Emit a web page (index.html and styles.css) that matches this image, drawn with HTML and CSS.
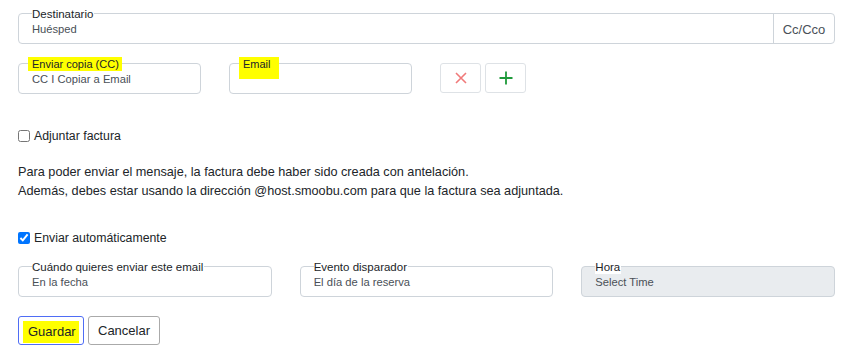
FILE: index.html
```html
<!DOCTYPE html>
<html lang="es">
<head>
<meta charset="utf-8">
<link rel="stylesheet" href="styles.css">
</head>
<body>
<div class="page">
  <div class="field dest">
    <div class="field-main">
      <span class="label">Destinatario</span>
      <span class="value">Huésped</span>
    </div>
    <div class="addon">Cc/Cco</div>
  </div>

  <div class="cc-row">
    <div class="field w183">
      <div class="field-main">
        <span class="label hl">Enviar copia (CC)</span>
        <span class="value">CC I Copiar a Email</span>
      </div>
    </div>
    <div class="field w183">
      <div class="field-main">
        <span class="label hl tall">Email</span>
        <span class="value"></span>
      </div>
    </div>
    <div class="icon-btns">
      <button class="icon-btn" type="button" aria-label="Eliminar">
        <svg width="12" height="12" viewBox="0 0 12 12"><path d="M1 1L11 11M11 1L1 11" stroke="#f07a7a" stroke-width="1.6" fill="none"/></svg>
      </button>
      <button class="icon-btn" type="button" aria-label="Añadir">
        <svg width="14" height="14" viewBox="0 0 14 14"><path d="M7 0.5V13.5M0.5 7H13.5" stroke="#1e9a3a" stroke-width="1.8" fill="none"/></svg>
      </button>
    </div>
  </div>

  <label class="check first"><input type="checkbox"> Adjuntar factura</label>

  <p class="info">Para poder enviar el mensaje, la factura debe haber sido creada con antelación.<br>Además, debes estar usando la dirección @host.smoobu.com para que la factura sea adjuntada.</p>

  <label class="check second"><input type="checkbox" checked> Enviar automáticamente</label>

  <div class="grid3">
    <div class="field">
      <div class="field-main">
        <span class="label">Cuándo quieres enviar este email</span>
        <span class="value">En la fecha</span>
      </div>
    </div>
    <div class="field">
      <div class="field-main">
        <span class="label">Evento disparador</span>
        <span class="value">El día de la reserva</span>
      </div>
    </div>
    <div class="field disabled">
      <div class="field-main">
        <span class="label">Hora</span>
        <span class="value">Select Time</span>
      </div>
    </div>
  </div>

  <div class="actions">
    <button class="btn primary" type="button"><span class="hl-text">Guardar</span></button>
    <button class="btn" type="button">Cancelar</button>
  </div>
</div>
</body>
</html>
```

FILE: styles.css
```css
* { box-sizing: border-box; }
body {
  margin: 0;
  background: #fff;
  font-family: "Liberation Sans", Arial, sans-serif;
  color: #212529;
}
.page {
  padding: 13px 19px 0 18px;
  width: 854px;
}
.field {
  position: relative;
  display: flex;
  height: 31px;
  border: 1px solid #ced4da;
  border-radius: 4px;
  background: #fff;
}
.field.disabled { background: #e9ecef; }
.field-main {
  flex: 1;
  position: relative;
  padding: 8px 0 0 13px;
}
.label {
  position: absolute;
  top: -6px;
  left: 13px;
  background: #fff;
  font-size: 11.5px;
  line-height: 13px;
  color: #212529;
  padding-right: 1px;
}
.label.hl {
  background: #ffff00;
  top: -7px;
  left: 9px;
  padding: 1px 3px 0 4px;
  line-height: 13px;
  font-size: 11px;
}
.label.tall {
  height: 22px;
  padding-right: 8px;
}
.value {
  display: block;
  font-size: 11.2px;
  line-height: 14px;
  color: #495057;
}
.addon {
  width: 61px;
  border-left: 1px solid #ced4da;
  display: flex;
  align-items: center;
  justify-content: center;
  font-size: 13px;
  color: #495057;
  padding-top: 1px;
}
.cc-row {
  display: flex;
  gap: 28px;
  margin-top: 19px;
}
.w183 { width: 183px; }
.icon-btns {
  display: flex;
  gap: 4px;
}
.icon-btn {
  width: 41px;
  height: 30px;
  border: 1px solid #dee2e6;
  border-radius: 3px;
  background: #fff;
  display: flex;
  align-items: center;
  justify-content: center;
  padding: 0;
}
.check {
  display: flex;
  align-items: center;
  font-size: 12.3px;
  line-height: 16px;
  color: #212529;
}
.check input {
  margin: 0 4px 0 0;
  width: 12px;
  height: 12px;
}
.check.first { margin-top: 34px; }
.info {
  margin: 19px 0 0;
  font-size: 12.7px;
  line-height: 19px;
  color: #212529;
}
.check.second { margin-top: 29px; }
.grid3 {
  display: grid;
  grid-template-columns: repeat(3, 1fr);
  gap: 28px;
  margin-top: 20px;
}
.actions {
  display: flex;
  gap: 4px;
  margin-top: 19px;
}
.btn {
  height: 29px;
  border: 1px solid #aaa;
  border-radius: 3px;
  background: #fff;
  font-family: "Liberation Sans", Arial, sans-serif;
  font-size: 13px;
  color: #212529;
  padding: 0 9px;
}
.btn.primary {
  border-color: #4f6df5;
  padding: 0 4px;
  width: 66px;
}
.hl-text {
  display: block;
  background: #ffff00;
  padding: 3px 5px 4px;
  margin-top: 3px;
}
```
